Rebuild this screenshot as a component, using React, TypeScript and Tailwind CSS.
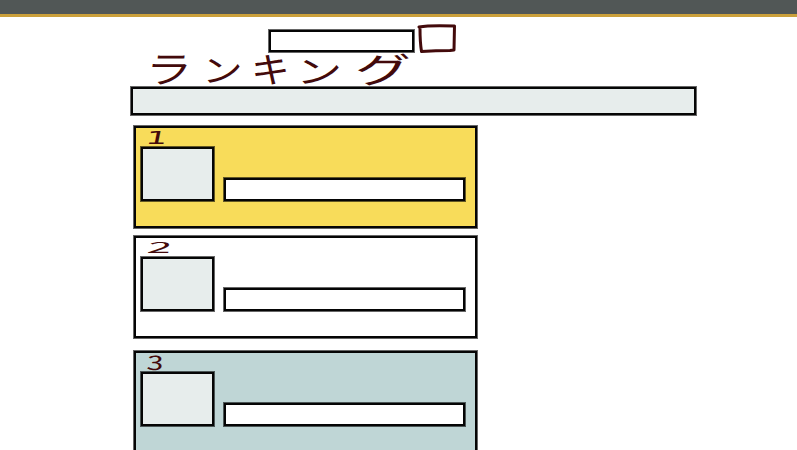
import type { ReactNode } from "react";

function Box({ className, children }: { className: string; children?: ReactNode }) {
  return (
    <div className={`shrink-0 border-2 border-[#050505] ring-1 ring-black/60 ${className}`}>{children}</div>
  );
}

function RankCard({ rank, color, rankStyle }: { rank: string; color: string; rankStyle: string }) {
  return (
    <Box className={`h-[102px] w-[343px] pl-[5px] ${color}`}>
      <div className="h-[19px] pl-[7px]">
        <span className={`block h-[19px] w-[24px] origin-left leading-[20px] text-[#430a0b] ${rankStyle}`}>
          {rank}
        </span>
      </div>
      <div className="flex items-end gap-[10px]">
        <Box className="h-[54px] w-[73px] bg-[#e7edec]" />
        <Box className="h-[23px] w-[241px] bg-white" />
      </div>
    </Box>
  );
}

export default function App() {
  return (
    <div className="h-[450px] w-full overflow-hidden bg-white font-['Noto_Sans_CJK_JP',sans-serif]">
      <header className="h-[17px] border-b-3 border-[#cba03b] bg-[#515756]" />
      <main className="pl-[131px]">
        <div className="flex h-[36px] items-end gap-[4px] pl-[138px]">
          <Box className="mb-[1px] h-[22px] w-[145px] bg-white" />
          <svg className="h-[30px] w-[39px] overflow-visible" viewBox="0 0 39 30" fill="none" stroke="#430a0b" strokeWidth="3" strokeLinejoin="round" strokeLinecap="round">
            <path d="M1 4 Q12 2 36.5 3 L36 27 L32 27.5 Q18 27.5 3.5 28.5 Q2 19 2 6" />
          </svg>
        </div>
        <h1 className="flex h-[34px] text-[37px] leading-[34px] font-normal text-[#430a0b]">
          <span className="block w-[52px] origin-top-left translate-x-[17px] -translate-y-[3px] scale-x-125 -skew-x-6">ラ</span>
          <span className="block w-[46px] origin-top-left translate-x-[19px] translate-y-[1px] scale-x-110 scale-y-85">ン</span>
          <span className="block w-[49px] origin-top-left translate-x-[22px] -translate-y-[1px] scale-x-105 scale-y-95">キ</span>
          <span className="block w-[56px] origin-top-left translate-x-[18px] translate-y-[2px] scale-x-125 scale-y-85">ン</span>
          <span className="block w-[60px] origin-top-left translate-x-[19px] -translate-y-[1px] scale-x-155 scale-y-95 skew-x-3">グ</span>
        </h1>
        <Box className="h-[28px] w-[565px] bg-[#e7edec]" />
        <div className="pt-[11px] pl-[3px]">
          <RankCard rank="1" color="bg-[#f8dc5a]" rankStyle="font-['DejaVu_Sans',sans-serif] text-[18px] scale-x-190 -skew-x-6 -translate-x-[2px]" />
          <div className="h-[8px]" />
          <RankCard rank="2" color="bg-white" rankStyle="text-[19px] scale-x-230 scale-y-80 -skew-x-6 -translate-y-[1px]" />
          <div className="h-[13px]" />
          <RankCard rank="3" color="bg-[#bfd6d6]" rankStyle="text-[20px] scale-x-150 -skew-x-3 -translate-x-[1px] -translate-y-[1px]" />
        </div>
      </main>
    </div>
  );
}
